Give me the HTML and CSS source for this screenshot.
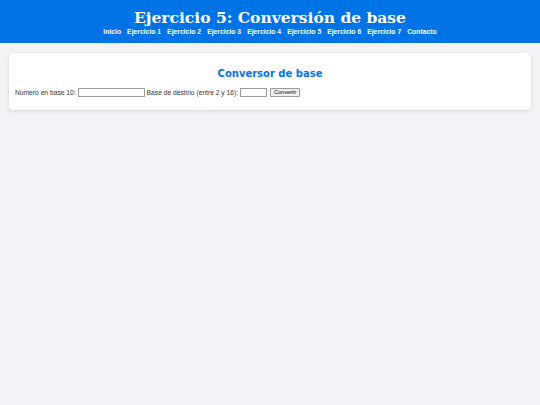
FILE: index.html
```html
<!DOCTYPE html>
<html lang="es">
<head>
<meta charset="utf-8">
<title>Ejercicio 5: Conversión de base</title>
<link rel="stylesheet" href="styles.css">
</head>
<body>
<header class="site-header">
  <h1 class="site-title">Ejercicio 5: Conversión de base</h1>
  <nav class="site-nav">
    <a href="#">Inicio</a>
    <a href="#">Ejercicio 1</a>
    <a href="#">Ejercicio 2</a>
    <a href="#">Ejercicio 3</a>
    <a href="#">Ejercicio 4</a>
    <a href="#">Ejercicio 5</a>
    <a href="#">Ejercicio 6</a>
    <a href="#">Ejercicio 7</a>
    <a href="#">Contacto</a>
  </nav>
</header>
<main class="card">
  <h2 class="card-title">Conversor de base</h2>
  <form class="converter">
    <label for="num">Número en base 10:</label>
    <input id="num" class="input-num" type="text">
    <label for="base">Base de destino (entre 2 y 16):</label>
    <input id="base" class="input-base" type="text">
    <button type="button" class="btn">Convertir</button>
  </form>
</main>
</body>
</html>
```

FILE: styles.css
```css
html, body {
  margin: 0;
  padding: 0;
}
body {
  background: #f2f2f7;
  font-family: "Liberation Sans", Arial, sans-serif;
  color: #333;
}
.site-header {
  background: #0073e6;
  color: #fff;
  text-align: center;
  height: 43px;
  box-sizing: border-box;
  padding-top: 8px;
}
.site-title {
  margin: 0;
  font-family: "DejaVu Serif", Georgia, serif;
  font-weight: bold;
  font-size: 15.5px;
  line-height: 19px;
}
.site-nav {
  display: flex;
  justify-content: center;
  gap: 6px;
  margin-top: 0;
}
.site-nav a {
  color: #fff;
  text-decoration: none;
  font-weight: bold;
  font-size: 6.8px;
  line-height: 9px;
}
.card {
  display: block;
  background: #fff;
  margin: 10px 9px;
  padding: 14px 6px 13px;
  border-radius: 4px;
  box-shadow: 0 1px 4px rgba(0,0,0,0.12);
}
.card-title {
  margin: 0 0 7px;
  text-align: center;
  color: #0073e6;
  font-family: "DejaVu Sans", Verdana, sans-serif;
  font-weight: bold;
  font-size: 10px;
  line-height: 14px;
}
.converter {
  display: flex;
  align-items: center;
  gap: 2px;
  font-size: 6.7px;
  color: #333;
}
.converter input {
  box-sizing: border-box;
  height: 9px;
  border: 1px solid #999;
  padding: 0;
  margin: 0;
  font-size: 7px;
}
.input-num { width: 67px; }
.input-base { width: 27px; }
.btn {
  box-sizing: border-box;
  height: 9px;
  padding: 0 3px;
  margin: 0 0 0 1px;
  font-size: 5.5px;
  font-family: "Liberation Sans", Arial, sans-serif;
  line-height: 7px;
  border: 1px solid #999;
  background: #efefef;
  border-radius: 1px;
}
```
